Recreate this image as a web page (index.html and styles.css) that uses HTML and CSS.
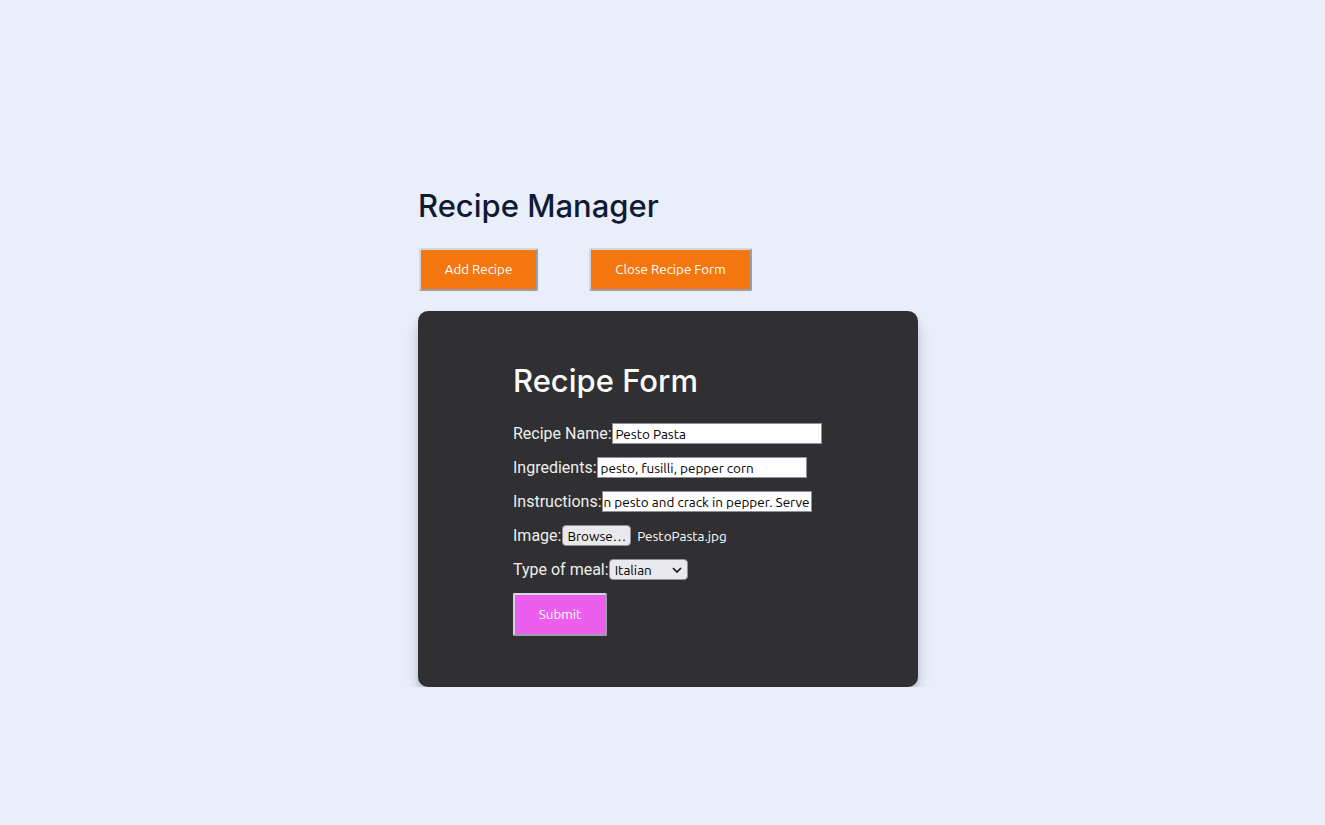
FILE: index.html
```html
<!DOCTYPE html>
<html lang="en">
<head>
<meta charset="utf-8">
<title>Recipe Manager</title>
<link rel="stylesheet" href="styles.css">
</head>
<body>
<main class="page">
  <div class="app">
    <h1 class="title">Recipe Manager</h1>
    <div class="actions">
      <button class="btn btn-orange btn-add">Add Recipe</button>
      <button class="btn btn-orange btn-close">Close Recipe Form</button>
    </div>
    <section class="card">
      <form class="form">
        <h2 class="form-title">Recipe Form</h2>
        <div class="row">
          <label class="label">Recipe Name:</label><input class="text" type="text" value="Pesto Pasta">
        </div>
        <div class="row">
          <label class="label">Ingredients:</label><input class="text" type="text" value="pesto, fusilli, pepper corn">
        </div>
        <div class="row">
          <label class="label">Instructions:</label><div class="text text-scroll"><span>Cook pasta, mix in pesto and crack in pepper. Serve</span></div>
        </div>
        <div class="row">
          <label class="label">Image:</label><span class="browse">Browse…</span><span class="filename">PestoPasta.jpg</span>
        </div>
        <div class="row">
          <label class="label">Type of meal:</label><span class="select"><span>Italian</span><svg class="chev" width="10" height="6" viewBox="0 0 10 6"><path d="M1 1 L5 5 L9 1" fill="none" stroke="#111" stroke-width="1.6"/></svg></span>
        </div>
        <div class="submit-row">
          <button type="button" class="btn btn-pink">Submit</button>
        </div>
      </form>
    </section>
  </div>
</main>
</body>
</html>
```
FILE: styles.css
```css
html, body {
  margin: 0;
  padding: 0;
}
body {
  background: #eaeefb;
  font-family: Roboto, "Liberation Sans", sans-serif;
}
.page {
  display: flex;
  justify-content: center;
  padding: 186px 0 0 11px;
}
.app {
  width: 500px;
}
.title {
  margin: 0;
  font-family: Inter, Roboto, sans-serif;
  font-weight: 500;
  font-size: 31px;
  line-height: 40px;
  color: #111a33;
}
.actions {
  display: flex;
  gap: 51px;
  margin-top: 22px;
}
.btn {
  font-family: Ubuntu, "Noto Sans", "Open Sans", sans-serif;
  font-size: 13.33px;
  color: #fff;
  border: 2px solid;
  border-color: #d6d7dc #9ba0a8 #9ba0a8 #d6d7dc;
  border-radius: 2px;
  padding: 0;
  cursor: pointer;
}
.btn-orange {
  background: #f4760f;
  height: 43px;
}
.btn-add { width: 119px; margin-left: 1px; }
.btn-close { width: 163px; }
.card {
  margin-top: 20px;
  background: #303032;
  border-radius: 10px;
  box-shadow: 0 10px 15px -3px rgba(20, 25, 50, 0.3), 0 4px 6px -2px rgba(20, 25, 50, 0.15);
  height: 376px;
  box-sizing: border-box;
  padding: 50px 0 0 95px;
}
.form-title {
  margin: 0 0 22px;
  font-family: Inter, Roboto, sans-serif;
  font-weight: 500;
  font-size: 31px;
  line-height: 40px;
  color: #fbfbfb;
}
.row {
  display: flex;
  align-items: center;
  height: 21px;
  margin-bottom: 13px;
  color: #eeeeee;
  font-size: 16px;
}
.label {
  white-space: nowrap;
}
.text {
  width: 210px;
  height: 21px;
  box-sizing: border-box;
  border: 1px solid #8f8f9d;
  background: #fff;
  font-family: Ubuntu, "Noto Sans", "Open Sans", sans-serif;
  font-size: 13.5px;
  color: #000;
  padding: 0 3px;
  margin: 0;
  outline: none;
}
.text-scroll {
  overflow: hidden;
  display: flex;
  justify-content: flex-end;
  align-items: center;
  white-space: nowrap;
  padding: 0 1px;
}
.browse {
  display: inline-flex;
  align-items: center;
  height: 21px;
  box-sizing: border-box;
  margin-left: 1px;
  padding: 0 4px;
  border: 1px solid #8f8f9d;
  border-radius: 4px;
  background: #e9e9ed;
  color: #000;
  font-family: Ubuntu, "Noto Sans", "Open Sans", sans-serif;
  font-size: 13.5px;
}
.filename {
  margin-left: 6px;
  font-family: Ubuntu, "Noto Sans", "Open Sans", sans-serif;
  font-size: 13.5px;
  color: #fff;
}
.select {
  display: inline-flex;
  align-items: center;
  justify-content: space-between;
  width: 79px;
  height: 21px;
  box-sizing: border-box;
  padding: 0 5px 0 5px;
  border: 1px solid #8f8f9d;
  border-radius: 4px;
  background: #e9e9ed;
  color: #000;
  font-family: Ubuntu, "Noto Sans", "Open Sans", sans-serif;
  font-size: 13.5px;
}
.submit-row {
  display: flex;
  margin-top: 13px;
}
.btn-pink {
  background: #ec5fee;
  width: 94px;
  height: 43px;
}
```
